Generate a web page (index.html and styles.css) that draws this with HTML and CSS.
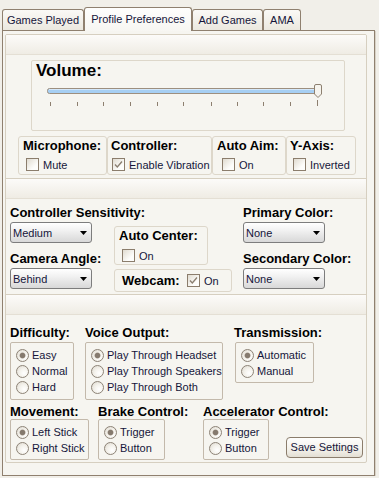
FILE: index.html
```html
<!DOCTYPE html>
<html>
<head>
<meta charset="utf-8">
<link rel="stylesheet" href="styles.css">
</head>
<body>
<div class="tabs">
  <div class="tab t1">Games Played</div>
  <div class="tab tab-active t2">Profile Preferences</div>
  <div class="tab t3">Add Games</div>
  <div class="tab t4">AMA</div>
</div>
<div class="panel">
  <div class="frame">
    <div class="band"></div>
    <div class="sec1">
      <div class="volume">
        <div class="vol-label">Volume:</div>
        <svg class="slider" width="300" height="30" viewBox="0 0 300 30">
          <rect x="11.5" y="8.5" width="273" height="5" rx="2" fill="#a7cff3" stroke="#9d8f7f"/>
          <line x1="13" y1="9.5" x2="283" y2="9.5" stroke="#d4e8fb"/>
          <g stroke="#8d7f6f">
            <line x1="14.5" y1="22" x2="14.5" y2="26"/>
            <line x1="41.5" y1="22" x2="41.5" y2="26"/>
            <line x1="67.5" y1="22" x2="67.5" y2="26"/>
            <line x1="94.5" y1="22" x2="94.5" y2="26"/>
            <line x1="121.5" y1="22" x2="121.5" y2="26"/>
            <line x1="147.5" y1="22" x2="147.5" y2="26"/>
            <line x1="175.5" y1="22" x2="175.5" y2="26"/>
            <line x1="201.5" y1="22" x2="201.5" y2="26"/>
            <line x1="227.5" y1="22" x2="227.5" y2="26"/>
            <line x1="254.5" y1="22" x2="254.5" y2="26"/>
            <line x1="281.5" y1="20" x2="281.5" y2="26"/>
          </g>
          <path d="M278.5 6 Q278.5 4.5 280 4.5 H284 Q285.5 4.5 285.5 6 V14 L282 17.5 L278.5 14 Z" fill="#f6f4ee" stroke="#8d8070"/>
        </svg>
      </div>
      <div class="checks">
        <div class="cgroup g-mic">
          <div class="glabel">Microphone:</div>
          <div class="check"><span class="cb"></span>Mute</div>
        </div>
        <div class="cgroup g-ctl">
          <div class="glabel">Controller:</div>
          <div class="check"><span class="cb on"><svg width="11" height="11" viewBox="0 0 11 11"><polyline points="2,5.5 4.3,8 9,2.5" fill="none" stroke="#8a7e70" stroke-width="1.3"/></svg></span>Enable Vibration</div>
        </div>
        <div class="cgroup g-aim">
          <div class="glabel">Auto Aim:</div>
          <div class="check"><span class="cb"></span>On</div>
        </div>
        <div class="cgroup g-y">
          <div class="glabel">Y-Axis:</div>
          <div class="check"><span class="cb"></span>Inverted</div>
        </div>
      </div>
    </div>
    <div class="band band-sep"></div>
    <div class="sec2">
      <div class="col-l">
        <div class="lbl">Controller Sensitivity:</div>
        <div class="combo"><span>Medium</span><svg width="7" height="4" viewBox="0 0 7 4"><polygon points="0,0 7,0 3.5,4" fill="#000"/></svg></div>
        <div class="lbl lbl2">Camera Angle:</div>
        <div class="combo"><span>Behind</span><svg width="7" height="4" viewBox="0 0 7 4"><polygon points="0,0 7,0 3.5,4" fill="#000"/></svg></div>
      </div>
      <div class="col-m">
        <div class="acbox">
          <div class="glabel">Auto Center:</div>
          <div class="check"><span class="cb"></span>On</div>
        </div>
        <div class="webbox">
          <span class="glabel web-label">Webcam:</span>
          <span class="cb on"><svg width="11" height="11" viewBox="0 0 11 11"><polyline points="2,5.5 4.3,8 9,2.5" fill="none" stroke="#8a7e70" stroke-width="1.3"/></svg></span>On
        </div>
      </div>
      <div class="col-r">
        <div class="lbl">Primary Color:</div>
        <div class="combo"><span>None</span><svg width="7" height="4" viewBox="0 0 7 4"><polygon points="0,0 7,0 3.5,4" fill="#000"/></svg></div>
        <div class="lbl lbl2">Secondary Color:</div>
        <div class="combo"><span>None</span><svg width="7" height="4" viewBox="0 0 7 4"><polygon points="0,0 7,0 3.5,4" fill="#000"/></svg></div>
      </div>
    </div>
    <div class="band band-sep"></div>
    <div class="sec3">
      <div class="row1">
        <div class="c-diff">
          <div class="lbl">Difficulty:</div>
          <div class="rbox w-diff">
            <div class="radio-row"><span class="rd on"></span>Easy</div>
            <div class="radio-row"><span class="rd"></span>Normal</div>
            <div class="radio-row"><span class="rd"></span>Hard</div>
          </div>
        </div>
        <div class="c-voice">
          <div class="lbl">Voice Output:</div>
          <div class="rbox w-voice">
            <div class="radio-row"><span class="rd on"></span>Play Through Headset</div>
            <div class="radio-row"><span class="rd"></span>Play Through Speakers</div>
            <div class="radio-row"><span class="rd"></span>Play Through Both</div>
          </div>
        </div>
        <div class="c-trans">
          <div class="lbl">Transmission:</div>
          <div class="rbox two w-trans">
            <div class="radio-row"><span class="rd on"></span>Automatic</div>
            <div class="radio-row"><span class="rd"></span>Manual</div>
          </div>
        </div>
      </div>
      <div class="row2">
        <div class="c-move">
          <div class="lbl">Movement:</div>
          <div class="rbox two r2 w-move">
            <div class="radio-row"><span class="rd on"></span>Left Stick</div>
            <div class="radio-row"><span class="rd"></span>Right Stick</div>
          </div>
        </div>
        <div class="c-brake">
          <div class="lbl">Brake Control:</div>
          <div class="rbox two r2 w-brake">
            <div class="radio-row"><span class="rd on"></span>Trigger</div>
            <div class="radio-row"><span class="rd"></span>Button</div>
          </div>
        </div>
        <div class="c-acc">
          <div class="lbl">Accelerator Control:</div>
          <div class="rbox two r2 w-acc">
            <div class="radio-row"><span class="rd on"></span>Trigger</div>
            <div class="radio-row"><span class="rd"></span>Button</div>
          </div>
        </div>
        <div class="c-btn">
          <div class="btn">Save Settings</div>
        </div>
      </div>
    </div>
  </div>
</div>
</body>
</html>
```

FILE: styles.css
```css
* { box-sizing: border-box; }
body {
  margin: 0;
  background: #f1efe9;
  font-family: "Liberation Sans", Arial, sans-serif;
  font-size: 11px;
  color: #15153a;
}

/* tabs */
.tabs {
  display: flex;
  align-items: flex-end;
  height: 30px;
  padding-left: 2px;
  position: relative;
  z-index: 2;
}
.tab {
  height: 21px;
  line-height: 20px;
  text-align: center;
  border: 1px solid #8f806f;
  border-bottom: none;
  border-radius: 3px 3px 0 0;
  background: linear-gradient(#faf9f6, #ebe8df);
  white-space: nowrap;
}
.tab-active {
  height: 24px;
  line-height: 23px;
  margin-bottom: -1px;
  background: linear-gradient(#fefefd, #f7f6f2);
}
.t1 { width: 82px; }
.t2 { width: 108px; }
.t3 { width: 71px; }
.t4 { width: 38px; }

/* panel */
.panel {
  position: relative;
  z-index: 1;
  margin-left: 2px;
  width: 373px;
  height: 446px;
  border: 1px solid #8f806f;
  background: #f6f5f0;
  padding: 3px 7px 0 2px;
  box-shadow: 1px 1px 0 #d8d2c6;
}
.frame {
  height: 429px;
  border: 1px solid #d6cfc0;
  border-radius: 2px;
  background: #f6f5f0;
  overflow: hidden;
}
.band {
  height: 20px;
  border-bottom: 1px solid #e4dfd4;
  background: linear-gradient(#fcfbf9, #efece4);
}
.band-sep {
  height: 21px;
  border-top: 1px solid #d6cfc0;
}

/* section 1 */
.sec1 {
  height: 123px;
  padding-top: 5px;
}
.volume {
  margin-left: 25px;
  width: 314px;
  height: 71px;
  border: 1px solid #ddd7ca;
  border-radius: 2px;
  padding-left: 4px;
}
.vol-label {
  font-weight: bold;
  font-size: 17px;
  line-height: 19px;
  color: #000;
}
.slider { display: block; }

.checks {
  display: flex;
  margin: 5px 0 0 12px;
}
.cgroup {
  height: 39px;
  border: 1px solid #ddd7ca;
  border-radius: 3px;
  padding-top: 1px;
}
.g-mic { width: 89px; padding-left: 4px; }
.g-ctl { width: 105px; padding-left: 3px; }
.g-aim { width: 74px; padding-left: 4px; }
.g-y { width: 70px; padding-left: 3px; }
.g-mic .cb { margin-left: 3px; }
.g-ctl .cb { margin-left: 1px; }
.g-aim .cb { margin-left: 5px; }
.g-y .cb { margin-left: 3px; }

.glabel, .lbl {
  font-weight: bold;
  font-size: 13px;
  line-height: 15px;
  color: #000;
  white-space: nowrap;
}
.check {
  display: flex;
  align-items: center;
  height: 13px;
  margin-top: 5px;
  white-space: nowrap;
}
.cb {
  flex: none;
  width: 13px;
  height: 13px;
  border: 1px solid #8b7d6c;
  background: linear-gradient(135deg, #e0dbd0, #fdfdfb 70%);
  margin-right: 4px;
}
.cb svg { display: block; }

/* section 2 */
.sec2 {
  display: flex;
  height: 95px;
  padding-top: 6px;
}
.col-l { margin-left: 4px; width: 104px; }
.col-m { width: 129px; }
.lbl2 { margin-top: 8px; }
.combo {
  margin-top: 2px;
  width: 82px;
  height: 21px;
  border: 1px solid #7d7d7d;
  border-radius: 3px;
  background: linear-gradient(#ffffff, #f1f1f1 40%, #d8d8d8);
  display: flex;
  align-items: center;
  justify-content: space-between;
  padding: 0 4px 0 2px;
}
.combo svg { display: block; }
.acbox {
  margin-top: 21px;
  width: 94px;
  height: 39px;
  border: 1px solid #ddd7ca;
  border-radius: 3px;
  padding: 1px 0 0 4px;
}
.acbox .check { margin-top: 6px; }
.acbox .cb { margin-left: 3px; }
.webbox {
  margin-top: 4px;
  width: 118px;
  height: 23px;
  border: 1px solid #ddd7ca;
  border-radius: 3px;
  display: flex;
  align-items: center;
  padding-left: 7px;
}
.web-label { width: 65px; }

/* section 3 */
.sec3 {
  padding: 10px 0 0 4px;
}
.row1 { display: flex; }
.row2 { display: flex; margin-top: 4px; }
.c-diff { width: 75px; }
.c-voice { width: 149px; }
.c-move { width: 88px; }
.c-brake { width: 105px; }
.c-acc { width: 83px; }
.rbox {
  margin-top: 2px;
  border: 1px solid #c3b9ab;
  border-radius: 2px;
  padding: 4px 0 4px 5px;
}
.rbox.two { padding-bottom: 3px; }
.rbox.r2 { margin-top: 0; }
.w-diff { width: 64px; }
.w-voice { width: 138px; }
.w-trans { width: 79px; margin-left: 1px; }
.w-move { width: 79px; }
.w-brake { width: 67px; }
.w-acc { width: 66px; }
.radio-row {
  display: flex;
  align-items: center;
  height: 16px;
  white-space: nowrap;
}
.rd {
  flex: none;
  width: 13px;
  height: 13px;
  border-radius: 50%;
  border: 1px solid #8d8377;
  background: radial-gradient(circle at 65% 65%, #ffffff, #f4f2ec 45%, #dcd7cc);
  margin-right: 3px;
}
.rd.on {
  background:
    radial-gradient(circle at 50% 50%, #857a6e 0, #857a6e 2.2px, #b9b0a5 2.8px, transparent 3.4px),
    radial-gradient(circle at 65% 65%, #ffffff, #f4f2ec 45%, #dcd7cc);
}
.btn {
  margin-top: 33px;
  width: 77px;
  height: 21px;
  border: 1px solid #8b7d6c;
  border-radius: 4px;
  background: linear-gradient(#fefefd, #f3f1ea 60%, #e3dfd4);
  text-align: center;
  line-height: 19px;
  white-space: nowrap;
}
```
